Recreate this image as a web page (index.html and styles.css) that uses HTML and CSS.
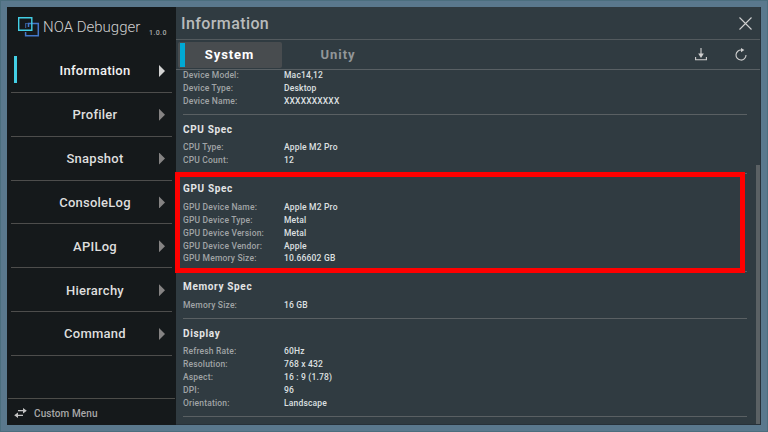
FILE: index.html
```html
<!DOCTYPE html>
<html lang="en">
<head>
<meta charset="utf-8">
<title>NOA Debugger</title>
<link rel="stylesheet" href="styles.css">
</head>
<body>
<div class="window">
  <aside class="sidebar">
    <header class="brand">
      <svg class="logo" width="22" height="20" viewBox="0 0 22 20" fill="none">
        <path d="M10.5 10V6.5H20.3V18.8H7.6V15" stroke="#4377c9" stroke-width="1.5"/>
        <path d="M7.6 11V6.5H10" stroke="#32588f" stroke-width="1.2"/>
        <path d="M.7.7H13.8V13.3H.7Z" stroke="#43cfe5" stroke-width="1.4"/>
      </svg>
      <span class="brand-name">NOA Debugger</span>
      <span class="version">1.0.0</span>
    </header>
    <nav class="menu">
      <a class="item active"><span>Information</span><i class="arrow"></i></a>
      <a class="item"><span>Profiler</span><i class="arrow"></i></a>
      <a class="item"><span>Snapshot</span><i class="arrow"></i></a>
      <a class="item"><span>ConsoleLog</span><i class="arrow"></i></a>
      <a class="item"><span>APILog</span><i class="arrow"></i></a>
      <a class="item"><span>Hierarchy</span><i class="arrow"></i></a>
      <a class="item"><span>Command</span><i class="arrow"></i></a>
    </nav>
    <footer class="custom">
      <svg width="13" height="10" viewBox="0 0 13 10" fill="none" stroke="#c4c4c4" stroke-width="1.3">
        <path d="M4 2.7H10M3 7.3H9"/>
        <path d="M9 0 12.8 2.7 9 5.4ZM4 4.6 .2 7.3 4 10Z" fill="#c4c4c4" stroke="none"/>
      </svg>
      <span>Custom Menu</span>
    </footer>
  </aside>
  <main class="main">
    <header class="titlebar">
      <h1>Information</h1>
      <svg width="13" height="13" viewBox="0 0 13 13" stroke="#d0d0d0" stroke-width="1.1"><path d="M.5.5 12.5 12.5M12.5.5.5 12.5"/></svg>
    </header>
    <div class="toolbar">
      <div class="tab selected">System</div>
      <div class="tab">Unity</div>
      <div class="tools">
        <svg width="12" height="13" viewBox="0 0 12 13" fill="none" stroke="#d0d0d0" stroke-width="1.1">
          <path d="M6 0V7M.6 9V11.7H11.4V9"/>
          <path d="M3.2 5.6H8.8L6 10Z" fill="#d0d0d0" stroke="none"/>
        </svg>
        <svg width="12" height="13" viewBox="0 0 12 13" fill="none" stroke="#d0d0d0" stroke-width="1.1">
          <path d="M6.5 2.1A5 5 0 1 0 11 7"/>
          <path d="M6 0 9.4 2 6 4.2Z" fill="#d0d0d0" stroke="none"/>
        </svg>
      </div>
    </div>
    <div class="content">
      <div class="list">
        <section class="device">
          <dl><dt>Device Model:</dt><dd>Mac14,12</dd><dt>Device Type:</dt><dd>Desktop</dd><dt>Device Name:</dt><dd>XXXXXXXXXX</dd></dl>
        </section>
        <section>
          <h2>CPU Spec</h2>
          <dl><dt>CPU Type:</dt><dd>Apple M2 Pro</dd><dt>CPU Count:</dt><dd>12</dd></dl>
        </section>
        <section>
          <h2>GPU Spec</h2>
          <dl><dt>GPU Device Name:</dt><dd>Apple M2 Pro</dd><dt>GPU Device Type:</dt><dd>Metal</dd><dt>GPU Device Version:</dt><dd>Metal</dd><dt>GPU Device Vendor:</dt><dd>Apple</dd><dt>GPU Memory Size:</dt><dd>10.66602 GB</dd></dl>
          <div class="highlight"></div>
        </section>
        <section>
          <h2>Memory Spec</h2>
          <dl><dt>Memory Size:</dt><dd>16 GB</dd></dl>
        </section>
        <section>
          <h2>Display</h2>
          <dl><dt>Refresh Rate:</dt><dd>60Hz</dd><dt>Resolution:</dt><dd>768 x 432</dd><dt>Aspect:</dt><dd>16 : 9 (1.78)</dd><dt>DPI:</dt><dd>96</dd><dt>Orientation:</dt><dd>Landscape</dd></dl>
        </section>
      </div>
      <div class="scrollbar"></div>
    </div>
  </main>
</div>
</body>
</html>
```

FILE: styles.css
```css
* { box-sizing: border-box; }
body { margin: 0; font-family: Roboto, "Liberation Sans", sans-serif; }
h1, h2, dl, dd { margin: 0; }
svg { display: block; flex: none; }

.window {
  display: flex;
  width: 768px;
  height: 432px;
  padding: 7px;
  background: #5a788d;
  box-shadow: inset 0 0 0 1px #4b6e7e;
}

.sidebar {
  display: flex;
  flex-direction: column;
  width: 169px;
  background: #15191b;
}
.brand {
  display: flex;
  height: 42px;
  padding: 10px 0 0 11px;
  color: #d0d0d0;
}
.brand-name {
  width: 106px;
  margin-left: 3px;
  font-size: 15px;
  font-weight: 300;
  line-height: 20px;
  letter-spacing: 0;
  white-space: nowrap;
}
.version {
  padding-top: 12px;
  font-size: 7px;
  font-weight: 500;
  line-height: 9px;
  letter-spacing: .4px;
  color: #aaa;
}
.menu { padding: 0 4px; }
.item {
  display: flex;
  align-items: center;
  height: 43.85px;
  padding: 1px 7px 0 3px;
  border-bottom: 1px solid #4d4d4c;
  color: #dedede;
  font-size: 13px;
  font-weight: 500;
  letter-spacing: .25px;
}
.item::before { content: ""; width: 3px; height: 27px; margin-top: -2px; }
.item.active::before { background: #43cfe5; }
.item span { flex: 1; text-align: center; padding-left: 14px; }
.item.active { color: #f2f2f2; }
.arrow {
  width: 6px;
  height: 12px;
  background: #858383;
  clip-path: polygon(0 0, 100% 50%, 0 100%);
}
.active .arrow { background: #d3d3d3; }
.custom {
  display: flex;
  align-items: center;
  gap: 7px;
  height: 27px;
  margin: auto 1px 0;
  padding: 2px 0 0 6px;
  border-top: 1px solid #4d4d4a;
  color: #a8a8a8;
  font-size: 10px;
  font-weight: 500;
  letter-spacing: .1px;
}

.main {
  display: flex;
  flex-direction: column;
  flex: 1;
  min-width: 0;
  background: #303b41;
  border-right: 1px solid #273139;
  border-bottom: 1px solid #273139;
}
.titlebar {
  display: flex;
  align-items: center;
  justify-content: space-between;
  height: 33px;
  padding: 0 8px 0 5px;
  border-bottom: 1px solid #535a5e;
}
h1 {
  color: #b9bbbc;
  font-size: 16px;
  font-weight: 500;
  letter-spacing: .4px;
}
.toolbar {
  display: flex;
  align-items: center;
  height: 30px;
  padding: 0 13px 0 2px;
  border-bottom: 1px solid #596064;
}
.tab {
  display: flex;
  align-items: center;
  justify-content: center;
  width: 112px;
  height: 26px;
  color: #929698;
  font-size: 13px;
  font-weight: 700;
  letter-spacing: .95px;
}
.tab.selected {
  position: relative;
  width: 104px;
  padding-right: 1px;
  border-radius: 2px;
  background: #484c4f;
  color: #fff;
}
.selected::before {
  content: "";
  position: absolute;
  left: 2px;
  top: 1px;
  width: 5px;
  height: 24px;
  background: #00a9d4;
}
.tools { display: flex; gap: 28px; margin-left: auto; }

.content { display: flex; flex: 1; min-height: 0; clip-path: inset(0 0 0 -2px); }
.list { width: 564px; margin: -1px 0 0 7px; }
section {
  position: relative;
  padding: 6px 0 6px;
  border-bottom: 1px solid #5a6063;
}
.device { padding-top: 0; }
h2 {
  height: 18px;
  margin-bottom: 2.5px;
  color: #e4e5e6;
  font-size: 10px;
  font-weight: 700;
  line-height: 18px;
  letter-spacing: .65px;
}
dl {
  display: grid;
  grid-template-columns: 101px 1fr;
  grid-auto-rows: 12.95px;
  font-size: 8.5px;
  font-weight: 500;
  line-height: 13px;
  letter-spacing: .18px;
}
dt { color: #a0a4a6; }
dd { color: #dee0e1; }
.highlight {
  position: absolute;
  top: -2px;
  right: 2px;
  left: -8px;
  height: 101px;
  border: 5px solid #f00;
  z-index: 1;
}
.scrollbar {
  width: 4px;
  margin: 95px 0 0 auto;
  background: #5b6164;
}
```
